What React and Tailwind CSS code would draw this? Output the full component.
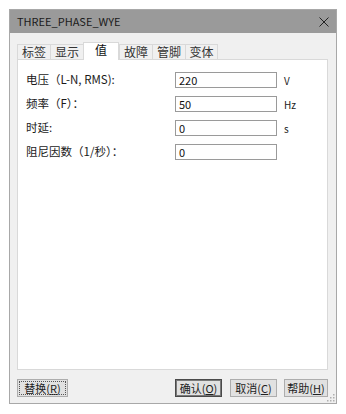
import React from "react";

const font = { fontFamily: '"Noto Sans CJK SC", "Noto Sans", sans-serif' };

function Tab({ label, active, w }) {
  return (
    <div
      className={
        active
          ? "relative z-10 -mb-px flex h-[18px] items-start justify-center border border-b-0 border-[#d9d9d9] bg-white text-[12px] text-[#111]"
          : "mt-[3px] flex h-[15px] items-center justify-center border border-b-0 border-r-0 border-[#d9d9d9] bg-[#f0f0f0] text-[12px] text-[#333]"
      }
      style={{ width: w }}
    >
      <span className="leading-[14px]">{label}</span>
    </div>
  );
}

function Row({ label, value, unit }) {
  return (
    <div className="flex h-[16px] items-center">
      <div className="w-[149px] text-[11.5px] leading-none text-[#1a1a1a]">{label}</div>
      <div className="flex h-[16px] w-[102px] items-center border border-[#9a9a9a] bg-white pl-[3px] text-[11px] text-[#111]">
        {value}
      </div>
      <div className="ml-[7px] text-[10px] text-[#222]">{unit}</div>
    </div>
  );
}

function Btn({ children, w, variant }) {
  const base =
    "flex h-[18px] items-center justify-center bg-[#e1e1e1] text-[11px] text-[#222] ";
  const border =
    variant === "default"
      ? "border border-[#4a4a4a] shadow-[inset_0_0_0_1px_#7a7a7a]"
      : variant === "focus"
      ? "border border-[#adadad] outline outline-1 outline-dotted outline-[#555] -outline-offset-[3px]"
      : "border border-[#adadad]";
  return (
    <div className={base + border} style={{ width: w }}>
      {children}
    </div>
  );
}

export default function App() {
  return (
    <div className="h-[414px] w-[346px] bg-white pl-[9px] pt-[9px]" style={font}>
      <div className="relative flex h-[395px] w-[328px] flex-col border border-[#a8a8a8] bg-[#f0f0f0]">
        <div className="flex h-[23px] items-center justify-between bg-[#9a9a9a] pl-[7px] pr-[7px]">
          <span className="text-[11px] text-[#1a1a1a]">THREE_PHASE_WYE</span>
          <svg width="10" height="10" viewBox="0 0 10 10" className="mt-[1px]">
            <path d="M0.5 0.5 L9.5 9.5 M9.5 0.5 L0.5 9.5" stroke="#222" strokeWidth="1" />
          </svg>
        </div>
        <div className="flex flex-1 flex-col pl-[7px] pt-[9px]">
          <div className="flex h-[17px] items-end">
            <Tab label="标签" w={33} />
            <Tab label="显示" w={33} />
            <Tab label="值" w={36} active />
            <Tab label="故障" w={33} />
            <Tab label="管脚" w={33} />
            <div className="mt-[3px] flex h-[15px] w-[33px] items-center justify-center border border-b-0 border-[#d9d9d9] bg-[#f0f0f0] text-[12px] text-[#333]">
              <span className="leading-[14px]">变体</span>
            </div>
          </div>
          <div className="flex h-[311px] w-[311px] flex-col gap-[8px] border border-[#d9d9d9] bg-white pl-[8px] pt-[12px]">
            <Row label="电压（L-N, RMS):" value="220" unit="V" />
            <Row label="频率（F）：" value="50" unit="Hz" />
            <Row label="时延:" value="0" unit="s" />
            <Row label="阻尼因数（1/秒）：" value="0" unit="" />
          </div>
          <div className="mt-[9px] flex w-[311px] items-center">
            <Btn w={51} variant="focus">
              替换(<span className="underline">R</span>)
            </Btn>
            <div className="flex-1" />
            <Btn w={47} variant="default">
              确认(<span className="underline">O</span>)
            </Btn>
            <div className="w-[8px]" />
            <Btn w={47}>
              取消(<span className="underline">C</span>)
            </Btn>
            <div className="w-[7px]" />
            <Btn w={44}>
              帮助(<span className="underline">H</span>)
            </Btn>
          </div>
        </div>
        <svg width="8" height="8" viewBox="0 0 8 8" className="absolute bottom-[1px] right-[1px]">
          <rect x="6" y="0" width="1.5" height="1.5" fill="#b0b0b0" />
          <rect x="3" y="3" width="1.5" height="1.5" fill="#b0b0b0" />
          <rect x="6" y="3" width="1.5" height="1.5" fill="#b0b0b0" />
          <rect x="0" y="6" width="1.5" height="1.5" fill="#b0b0b0" />
          <rect x="3" y="6" width="1.5" height="1.5" fill="#b0b0b0" />
          <rect x="6" y="6" width="1.5" height="1.5" fill="#b0b0b0" />
        </svg>
      </div>
    </div>
  );
}
